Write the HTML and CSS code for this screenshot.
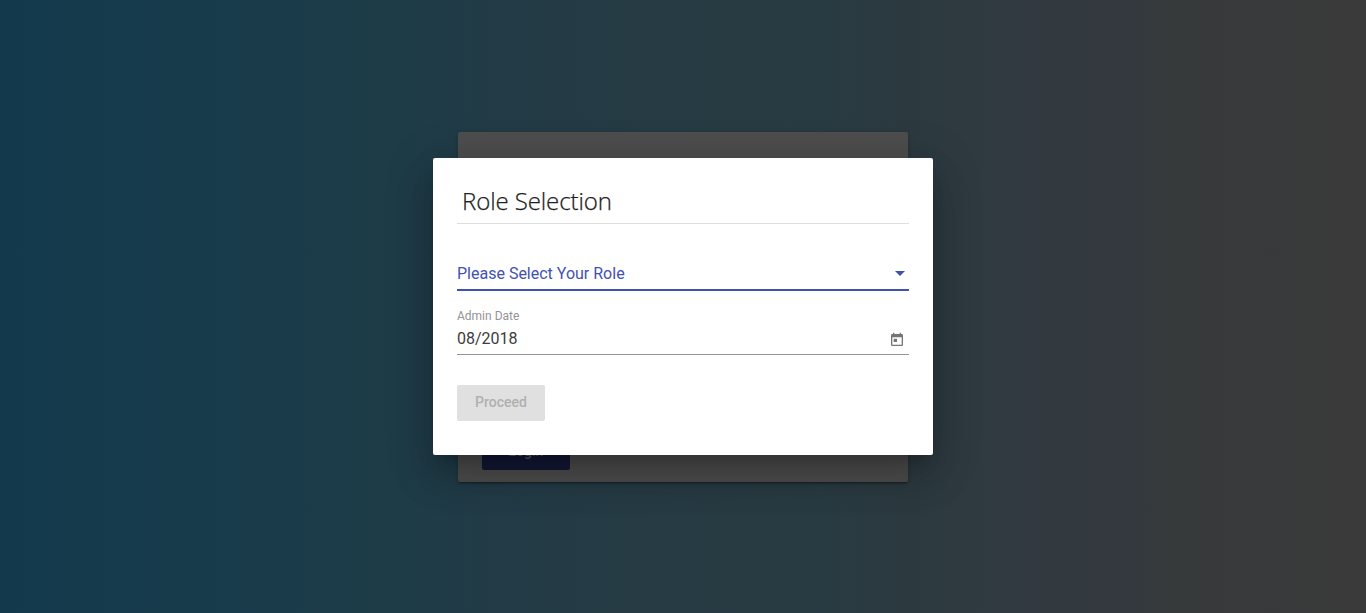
FILE: index.html
```html
<!DOCTYPE html>
<html lang="en">
<head>
<meta charset="utf-8">
<title>Role Selection</title>
<link rel="stylesheet" href="styles.css">
</head>
<body>
<main class="login-page">
  <section class="login-card">
    <button class="login-button">Login</button>
  </section>
</main>
<div class="overlay">
  <section class="dialog" role="dialog" aria-labelledby="dialog-title">
    <h1 class="dialog-title" id="dialog-title"><span class="title-text">Role Selection</span></h1>
    <div class="field select-field">
      <span class="placeholder">Please Select Your Role</span>
      <span class="arrow"></span>
    </div>
    <div class="field-group">
      <label class="date-label">Admin Date</label>
      <div class="field date-field">
        <span class="date-value">08/2018</span>
        <svg class="calendar" viewBox="0 0 24 24" width="16" height="16"><path d="M19 3h-1V1h-2v2H8V1H6v2H5c-1.100 0-2 .9-2 2v14c0 1.100.9 2 2 2h14c1.100 0 2-.9 2-2V5c0-1.100-.9-2-2-2zm0 16H5V8h14v11zM7 10h5v5H7z"/></svg>
      </div>
    </div>
    <button class="proceed-button" disabled>Proceed</button>
  </section>
</div>
</body>
</html>
```
FILE: styles.css
```css
* { box-sizing: border-box; }
body {
  margin: 0;
  height: 613px;
  overflow: hidden;
  font-family: Roboto, sans-serif;
}
.login-page {
  height: 613px;
  display: flex;
  flex-direction: column;
  align-items: center;
  padding-top: 132px;
  background: linear-gradient(90deg, #13394d 0, #163b4c 130px, #193b4a 250px, #1d3c48 380px, #233b46 520px, #263b44 650px, #293b42 820px, #2c3a40 910px, #303a40 1000px, #33393f 1090px, #34393f 1130px, #363a3b 1170px, #383a3b 1230px, #3a3a3a 1366px);
}
.login-card {
  width: 450px;
  height: 350px;
  display: flex;
  align-items: flex-end;
  padding: 0 24px 12px;
  background: #4d4d4d;
  border-radius: 2px;
  box-shadow: 0 3px 1px -2px rgba(0,0,0,.2), 0 2px 2px rgba(0,0,0,.14), 0 1px 5px rgba(0,0,0,.12);
}
.login-button {
  width: 88px;
  height: 36px;
  border: 0;
  border-radius: 2px;
  padding: 0 0 2px;
  background: #131836;
  color: #5a5a5a;
  font: 500 14px Roboto, sans-serif;
}
.overlay {
  position: absolute;
  inset: 0;
  display: flex;
  justify-content: center;
  align-items: flex-start;
  padding-top: 158px;
}
.dialog {
  width: 500px;
  height: 297px;
  padding: 24px;
  background: #fff;
  border-radius: 2px;
  box-shadow: 0 11px 15px -7px rgba(0,0,0,.2), 0 24px 38px 3px rgba(0,0,0,.14), 0 9px 46px 8px rgba(0,0,0,.12);
}
.dialog-title {
  height: 42px;
  margin: 0;
  padding-left: 5px;
  border-bottom: 1px solid #dedede;
  color: #212121;
  font: 300 24px/38px "Open Sans", sans-serif;
  letter-spacing: -.1px;
  -webkit-text-stroke: .25px #212121;
}
.title-text { white-space: nowrap; }
.field {
  display: flex;
  justify-content: space-between;
  font-size: 16px;
}
.select-field {
  height: 34px;
  margin-top: 33px;
  border-bottom: 2px solid #3f51b5;
  color: #3f51b5;
  line-height: 34px;
}
.arrow {
  margin: 14px 4px 0 0;
  width: 0;
  height: 0;
  border: 5px solid transparent;
  border-top-color: #3f51b5;
  border-bottom: 0;
}
.field-group { padding-top: 17px; }
.date-label {
  display: block;
  color: #949494;
  font-size: 12px;
  line-height: 16px;
}
.date-field {
  height: 31px;
  border-bottom: 1px solid #949494;
  color: #3c3c3c;
  line-height: 30px;
}
.calendar {
  margin: 8px 4px 0 0;
  fill: #757575;
}
.proceed-button {
  width: 88px;
  height: 36px;
  margin-top: 30px;
  padding: 0 0 2px;
  border: 0;
  border-radius: 2px;
  background: #e0e0e0;
  color: #b0b0b0;
  font: 500 14px Roboto, sans-serif;
}
```
